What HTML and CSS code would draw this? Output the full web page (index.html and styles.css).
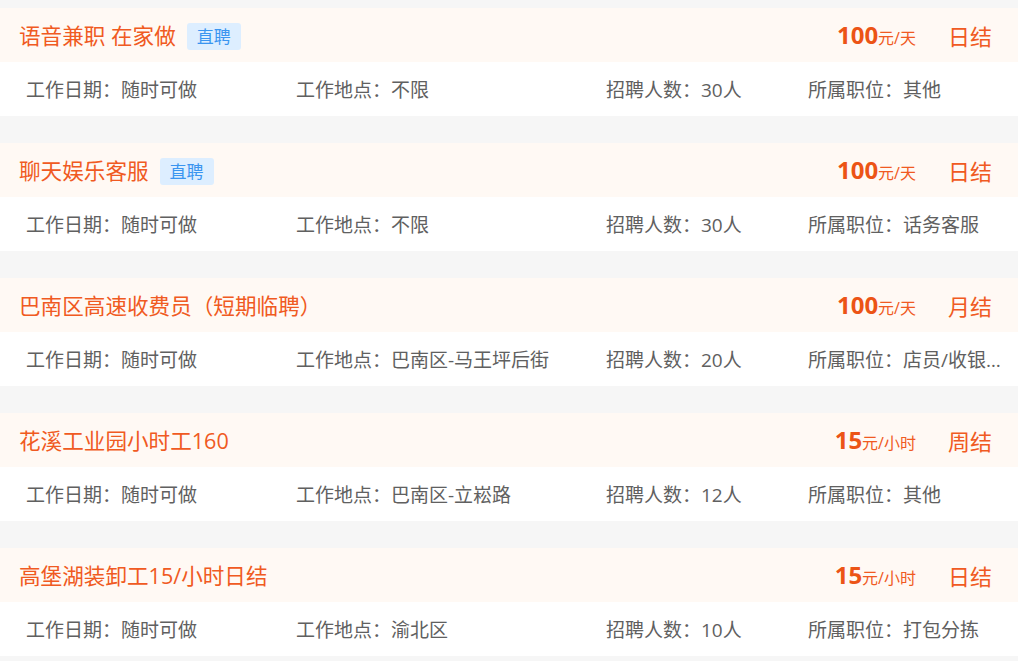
FILE: index.html
```html
<!DOCTYPE html>
<html lang="zh-CN">
<head>
<meta charset="utf-8">
<title>兼职列表</title>
<link rel="stylesheet" href="styles.css">
</head>
<body>
<div class="list">
  <div class="card">
    <div class="card-head">
      <div class="title-wrap"><span class="title">语音兼职 在家做</span><span class="tag">直聘</span></div>
      <div class="price"><b>100</b>元/天</div>
      <div class="settle">日结</div>
    </div>
    <div class="card-body">
      <div class="col c1">工作日期：随时可做</div>
      <div class="col c2">工作地点：不限</div>
      <div class="col c3">招聘人数：30人</div>
      <div class="col c4">所属职位：其他</div>
    </div>
  </div>
  <div class="card">
    <div class="card-head">
      <div class="title-wrap"><span class="title">聊天娱乐客服</span><span class="tag">直聘</span></div>
      <div class="price"><b>100</b>元/天</div>
      <div class="settle">日结</div>
    </div>
    <div class="card-body">
      <div class="col c1">工作日期：随时可做</div>
      <div class="col c2">工作地点：不限</div>
      <div class="col c3">招聘人数：30人</div>
      <div class="col c4">所属职位：话务客服</div>
    </div>
  </div>
  <div class="card">
    <div class="card-head">
      <div class="title-wrap"><span class="title">巴南区高速收费员（短期临聘）</span></div>
      <div class="price"><b>100</b>元/天</div>
      <div class="settle">月结</div>
    </div>
    <div class="card-body">
      <div class="col c1">工作日期：随时可做</div>
      <div class="col c2">工作地点：巴南区-马王坪后街</div>
      <div class="col c3">招聘人数：20人</div>
      <div class="col c4">所属职位：店员/收银员</div>
    </div>
  </div>
  <div class="card">
    <div class="card-head">
      <div class="title-wrap"><span class="title">花溪工业园小时工160</span></div>
      <div class="price"><b>15</b>元/小时</div>
      <div class="settle">周结</div>
    </div>
    <div class="card-body">
      <div class="col c1">工作日期：随时可做</div>
      <div class="col c2">工作地点：巴南区-立崧路</div>
      <div class="col c3">招聘人数：12人</div>
      <div class="col c4">所属职位：其他</div>
    </div>
  </div>
  <div class="card">
    <div class="card-head">
      <div class="title-wrap"><span class="title">高堡湖装卸工15/小时日结</span></div>
      <div class="price"><b>15</b>元/小时</div>
      <div class="settle">日结</div>
    </div>
    <div class="card-body">
      <div class="col c1">工作日期：随时可做</div>
      <div class="col c2">工作地点：渝北区</div>
      <div class="col c3">招聘人数：10人</div>
      <div class="col c4">所属职位：打包分拣</div>
    </div>
  </div>
</div>
</body>
</html>
```
FILE: styles.css
```css
html, body {
  margin: 0;
  padding: 0;
  background: #f6f6f6;
}
body {
  font-family: "Open Sans", "Noto Sans CJK SC", sans-serif;
}
.list {
  padding-top: 8px;
  display: flex;
  flex-direction: column;
  gap: 27px;
}
.card {
  display: flex;
  flex-direction: column;
}
.card-head {
  box-sizing: border-box;
  height: 54px;
  background: #fff9f4;
  display: flex;
  align-items: center;
  padding: 2px 26px 0 19px;
}
.title-wrap {
  flex: 1;
  display: flex;
  align-items: center;
  min-width: 0;
}
.title {
  font-size: 21.6px;
  line-height: 28px;
  color: #f05a22;
  white-space: nowrap;
}
.tag {
  margin-left: 11px;
  height: 27px;
  line-height: 27px;
  padding: 0 10px;
  font-size: 17px;
  color: #3a95f0;
  background: #ddeeff;
  border-radius: 3px;
}
.price {
  font-size: 16px;
  color: #f05a22;
  line-height: 28px;
  white-space: nowrap;
}
.price b {
  font-size: 24px;
  font-weight: 700;
  color: #ec5416;
}
.settle {
  margin-left: 32px;
  font-size: 22px;
  line-height: 28px;
  color: #f05a22;
  white-space: nowrap;
}
.card-body {
  box-sizing: border-box;
  height: 54px;
  background: #ffffff;
  display: flex;
  align-items: center;
  padding: 2px 14px 0 26px;
}
.col {
  font-size: 19px;
  line-height: 26px;
  color: #606060;
  white-space: nowrap;
  overflow: hidden;
  text-overflow: ellipsis;
}
.c1 { width: 270px; flex: none; }
.c2 { width: 310px; flex: none; }
.c3 { width: 202px; flex: none; }
.c4 { flex: 1; min-width: 0; }
```
